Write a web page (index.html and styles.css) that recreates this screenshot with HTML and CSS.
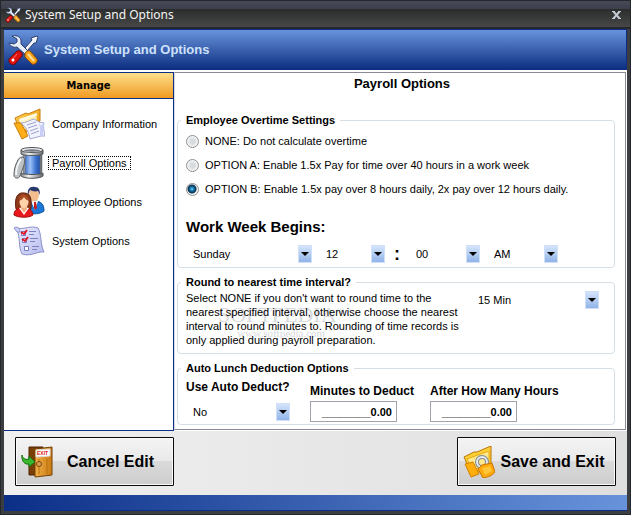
FILE: index.html
```html
<!DOCTYPE html>
<html lang="en">
<head>
<meta charset="utf-8">
<title>System Setup and Options</title>
<link rel="stylesheet" href="styles.css">
</head>
<body>
<svg class="defs" aria-hidden="true">
  <defs>
    <linearGradient id="gold" x1="0" y1="0" x2="1" y2="1"><stop offset="0" stop-color="#ffd75a"/><stop offset="1" stop-color="#ef8e00"/></linearGradient>
    <linearGradient id="steel" x1="0" y1="0" x2="1" y2="0"><stop offset="0" stop-color="#85888b"/><stop offset=".35" stop-color="#f5f6f6"/><stop offset="1" stop-color="#63666a"/></linearGradient>
    <linearGradient id="blue" x1="0" y1="0" x2="1" y2="0"><stop offset="0" stop-color="#2456b4"/><stop offset=".4" stop-color="#9cc2f8"/><stop offset=".7" stop-color="#3f74d0"/><stop offset="1" stop-color="#1a479f"/></linearGradient>
    <linearGradient id="sheet" x1="0" y1="0" x2="1" y2="1"><stop offset="0" stop-color="#eceeff"/><stop offset="1" stop-color="#b7bbee"/></linearGradient>
    <linearGradient id="wood" x1="0" y1="0" x2="1" y2="0"><stop offset="0" stop-color="#f2b047"/><stop offset="1" stop-color="#c97a14"/></linearGradient>
    <linearGradient id="drop" x1="0" y1="0" x2="0" y2="1"><stop offset="0" stop-color="#d6e6fb"/><stop offset="1" stop-color="#8fb2e8"/></linearGradient>
    <symbol id="tools" viewBox="0 0 32 32">
      <path d="M18 14 25 6l-1-2 6-2 1 1-2 6-2 0-7 8z" fill="#f2f6fc" stroke="#29406f"/>
      <path d="M5 2c3-1 8 0 9 4l0 4 8 8-3 3-9-8c-4 1-7-1-8-4l5 1 3-2 0-3z" fill="#e6edf7" stroke="#29406f"/>
      <path d="M18 20c0-2 3-4 5-3l7 8c1 3-2 6-5 5l-7-7z" fill="#f7a21a" stroke="#8d4a00"/>
      <path d="M21 20l6 7" stroke="#ffe09a" stroke-width="2"/>
      <path d="M10 17c3-1 6 2 5 5l-7 8c-3 2-7-1-6-5z" fill="#e01010" stroke="#6e0505"/>
      <path d="M10 20l-5 6" stroke="#ff7565"/>
      <circle cx="6" cy="26" r="1.5" fill="#fff"/>
    </symbol>
    <symbol id="folder" viewBox="0 0 32 32">
      <path d="M2 10 13 5l2 1L27 1v12L9 28z" fill="url(#gold)" stroke="#c77d10"/>
      <path d="M5 12 24 5v12L11 22z" fill="#fff3b6" stroke="#eab33c"/>
      <path d="M6 11l18-6v2L8 14z" fill="#fffbe6"/>
      <path d="M1 15h7l7 13-6 3z" fill="#ffae15" stroke="#c77d10"/>
      <path d="M8 15c5 0 9-3 13-4l5 3 5 1c-1 4 0 8 1 13l-4 0-11 3c-1-6-3-11-9-16z" fill="#f1f3ff" stroke="#a4a9cf"/>
      <path d="M27 14l-1 4 5-2-1 11-3 1z" fill="#c8cef5"/>
      <path d="M14 17l9-3M15 20l9-3M17 23l8-3M18 26l8-3" stroke="#9ca2c8"/>
    </symbol>
    <symbol id="barrel" viewBox="0 0 32 32">
      <path d="M10 7h18v20H10z" fill="url(#blue)"/>
      <path d="M8 26c3 2 19 2 22 0v3c-3 3-19 3-22 0z" fill="url(#steel)" stroke="#4e5155"/>
      <path d="M10 8h2v18h-2zM27 8h2v18h-2z" fill="url(#steel)" stroke="#6a6d71" stroke-width=".5"/>
      <path d="M8 3v4c3 2 19 2 22 0V3z" fill="url(#steel)" stroke="#55585c"/>
      <ellipse cx="19" cy="3" rx="11" ry="2.500" fill="#e6e8ea" stroke="#55585c"/>
      <ellipse cx="19" cy="3.500" rx="8" ry="1.200" fill="#737a82"/>
      <path d="M9 10c3 0 3 4 2 8L7 29c-1 3-6 3-6-1 0-5 1-9 3-13 1-3 3-5 5-5z" fill="#bfc2c4" stroke="#5d6063"/>
      <path d="M8 12C5 16 3 21 3 28" fill="none" stroke="#f4f5f6" stroke-width="2"/>
    </symbol>
    <symbol id="people" viewBox="0 0 32 32">
      <path d="M14 26c0-8 2-11 7-11 7 0 10 3 10 10-4 3-10 4-17 1z" fill="#1c78d8" stroke="#0f4d9b"/>
      <path d="M18 15l4 9 3-9z" fill="#fff"/><path d="M21 16h2l1 6-2 2-1-2z" fill="#cb1a1a"/>
      <ellipse cx="21" cy="9" rx="5" ry="6.500" fill="#f3bd8e"/>
      <path d="M15 9c-1-6 2-9 7-8 4 0 5 3 5 8l-2-4c-3 1-6 0-8-1z" fill="#29386b"/>
      <path d="M3 23C1 11 5 6 11 7c6 0 8 5 7 16-3 2-12 3-15 0z" fill="#8c3818" stroke="#5e210b"/>
      <path d="M1 29c0-5 3-7 9-7 7 0 9 2 10 7-4 3-14 3-19 0z" fill="#e8191c" stroke="#a90d0d"/>
      <path d="M6 22l5 7 5-7-5-1z" fill="#fff"/><path d="M8 20h6v3l-3 4-3-4z" fill="#efb184"/>
      <ellipse cx="11" cy="16" rx="4.500" ry="6" fill="#ffd2aa"/>
      <path d="M6 15c2-1 4-2 5-4 1 2 3 3 5 4l-1-5-5-2-4 3z" fill="#a84a23"/>
    </symbol>
    <symbol id="checks" viewBox="0 0 32 32">
      <path d="M3 3c8 2 15-3 22 0 4 7 2 16 6 24-7-1-13 5-22 2C5 22 8 12 3 3z" fill="url(#sheet)" stroke="#8a90c8"/>
      <path d="M1 3c3-2 6 0 6 4l-3 0z" fill="#cbd0fa" stroke="#8a90c8"/>
      <path d="M8.500 6.500h4v4h-4zM9.500 13.500h4v4h-4zM11.500 21.500h4v4h-4z" fill="#fff" stroke="#747bc0"/>
      <path d="M8 7l3 2 3-4M9 14l3 2 3-4" fill="none" stroke="#e11522" stroke-width="2"/>
      <path d="M16 6.500h7M16 9.500h5M17 13.500h8M17 16.500h5M19 21.500h7M19 24.500h5" stroke="#7d84bd"/>
    </symbol>
    <symbol id="door" viewBox="0 0 32 32">
      <path d="M8 1h14v28H8z" fill="#7a3f07" stroke="#4f2703"/>
      <path d="M14 3 31 1v28l-17 2z" fill="url(#wood)" stroke="#744006"/>
      <path d="M18 13v15M26 13v15" stroke="#b9700f"/>
      <path d="M15 4l14-1v7l-14 1z" fill="#fff" stroke="#dcdcdc"/>
      <circle cx="18" cy="18" r="2.500" fill="#dba254" stroke="#7c450c"/>
      <path d="M1 9c1 4 4 5 7 4l0-3 6 6-6 5v-3C4 19 0 15 1 9z" fill="#39b72c" stroke="#197010"/>
      <text x="16" y="9" class="exit-sign">EXIT</text>
    </symbol>
    <symbol id="save" viewBox="0 0 32 32">
      <path d="M1 11l10-5 3 0L28 0v20L9 29z" fill="#ffd033" stroke="#b87408"/>
      <path d="M4 13 26 5v13L10 24z" fill="#ffe98c" stroke="#e6a91e"/>
      <path d="M2 18l8-2 6 12-8 3z" fill="#ffae0b" stroke="#d18007"/>
      <circle cx="19" cy="16" r="5" fill="none" stroke="#7f8790" stroke-width="4"/>
      <circle cx="19" cy="16" r="5" fill="none" stroke="#e5ebf0" stroke-width="2"/>
      <path d="M15 23l4-4 10-2 3 9c-3 4-7 5-12 6z" fill="#ffa90c" stroke="#ca7700"/>
      <path d="M19 22l8-2 2 5-7 4z" fill="#ffc63a"/>
    </symbol>
    <symbol id="arrow" viewBox="0 0 14 18">
      <rect x=".5" y=".5" width="13" height="17" fill="url(#drop)" stroke="#cfe0f8"/>
      <path d="M3 7h8L7 11z" fill="#000"/>
    </symbol>
  </defs>
</svg>
<div class="window">
  <header class="titlebar">
    <svg class="title-icon"><use href="#tools"/></svg>
    <span class="title-text">System Setup and Options</span>
    <button class="close" type="button" aria-label="Close"><svg viewBox="0 0 9 8"><path d="M0 .5h3M6 .5h3M0 7.500h3M6 7.500h3" stroke="#c3cbd6"/><path d="M1.500 .5l6 7M7.500 .5l-6 7" stroke="#c3cbd6" stroke-width="2"/></svg></button>
  </header>
  <div class="client">
    <div class="banner">
      <svg class="icon"><use href="#tools"/></svg>
      <h1>System Setup and Options</h1>
    </div>
    <div class="body">
      <nav class="sidebar">
        <h2>Manage</h2>
        <a href="#company"><svg class="icon"><use href="#folder"/></svg><span>Company Information</span></a>
        <a href="#payroll" class="current"><svg class="icon"><use href="#barrel"/></svg><span>Payroll Options</span></a>
        <a href="#employee"><svg class="icon"><use href="#people"/></svg><span>Employee Options</span></a>
        <a href="#system"><svg class="icon"><use href="#checks"/></svg><span>System Options</span></a>
      </nav>
      <main class="panel">
        <h2>Payroll Options</h2>
        <fieldset>
          <legend>Employee Overtime Settings</legend>
          <label class="choice"><input type="radio" name="overtime">NONE: Do not calculate overtime</label>
          <label class="choice"><input type="radio" name="overtime">OPTION A: Enable 1.5x Pay for time over 40 hours in a work week</label>
          <label class="choice"><input type="radio" name="overtime" checked>OPTION B: Enable 1.5x pay over 8 hours daily, 2x pay over 12 hours daily.</label>
          <h3>Work Week Begins:</h3>
          <div class="times">
            <span class="drop day"><select aria-label="Day"><option>Sunday</option></select><svg><use href="#arrow"/></svg></span>
            <span class="drop hour"><select aria-label="Hour"><option>12</option></select><svg><use href="#arrow"/></svg></span>
            <span class="colon">:</span>
            <span class="drop part"><select aria-label="Minute"><option>00</option></select><svg><use href="#arrow"/></svg></span>
            <span class="drop part"><select aria-label="AM or PM"><option>AM</option></select><svg><use href="#arrow"/></svg></span>
          </div>
        </fieldset>
        <fieldset class="rounding">
          <legend>Round to nearest time interval?</legend>
          <div class="round-row">
            <div class="watermark"><b>SOFTPEDIA<sup>™</sup></b><span>www.softpedia.com</span></div>
            <p>Select NONE if you don't want to round time to the<br>nearest specified interval, otherwise choose the nearest<br>interval to round minutes to. Rounding of time records is<br>only applied during payroll preparation.</p>
            <span class="drop interval"><select aria-label="Time interval"><option>15 Min</option></select><svg><use href="#arrow"/></svg></span>
          </div>
        </fieldset>
        <fieldset class="lunch">
          <legend>Auto Lunch Deduction Options</legend>
          <div class="lunch-row">
            <div class="field auto"><label for="auto">Use Auto Deduct?</label><span class="drop"><select id="auto"><option>No</option></select><svg><use href="#arrow"/></svg></span></div>
            <div class="field amount"><label for="minutes">Minutes to Deduct</label><input id="minutes" type="text" value="________0.00"></div>
            <div class="field amount"><label for="hours">After How Many Hours</label><input id="hours" type="text" value="________0.00"></div>
          </div>
        </fieldset>
      </main>
    </div>
    <footer class="actions">
      <button type="button"><svg class="icon"><use href="#door"/></svg><span>Cancel Edit</span></button>
      <button type="button"><svg class="icon"><use href="#save"/></svg><span>Save and Exit</span></button>
    </footer>
    <div class="strip"></div>
  </div>
</div>
</body>
</html>
```
FILE: styles.css
```css
* { box-sizing: border-box; }
body {
  margin: 0;
  font: 11px/14px "Liberation Sans", Arial, sans-serif;
  color: #000;
}
h1, h2, h3, p { margin: 0; }
.defs { position: absolute; width: 0; height: 0; }
.icon { width: 32px; height: 32px; flex: none; }
.window {
  display: flex;
  flex-direction: column;
  min-height: 100vh;
  padding: 0 3px 3px;
  background: #3b3d41;
  border: 1px solid #24272c;
}
.titlebar {
  display: flex;
  align-items: center;
  gap: 4px;
  height: 28px;
  margin: 0 -3px;
  padding: 0 9px 0 4px;
  background: linear-gradient(#474a56 0, #3d404c 8px, #2b2c2c 8px, #474747 26px, #24272c 26px);
}
.title-icon { width: 16px; height: 16px; }
.title-text { flex: 1; font: 12px/16px "Noto Sans", Tahoma, sans-serif; color: #f4f4f4; }
.close { display: flex; padding: 0; border: 0; background: none; }
.close svg { width: 9px; height: 8px; }
.client { flex: 1; display: flex; flex-direction: column; background: #fff; }
.banner {
  display: flex;
  align-items: center;
  gap: 5px;
  height: 41px;
  padding-left: 3px;
  border: 1px solid #0b2f87;
  border-width: 1px 1px 0 0;
  background: linear-gradient(#6893db, #0b2d80);
}
.banner h1 { font-size: 13px; line-height: 20px; color: #cfe2fc; }
.body { flex: 1; display: flex; padding-top: 2px; }
.sidebar {
  width: 170px;
  flex: none;
  border: 1px solid #0b2f87;
  border-width: 1px 1px 1px 0;
}
.sidebar h2 {
  margin-bottom: 9px;
  font: bold 11px/25px "DejaVu Sans Condensed", Tahoma, sans-serif;
  text-align: center;
  border-bottom: 1px solid #0b2f87;
  background: linear-gradient(#fddf8a, #f09a22);
}
.sidebar a {
  display: flex;
  align-items: center;
  gap: 3px;
  height: 32px;
  margin: 0 0 7px 9px;
  color: #000;
  text-decoration: none;
}
.sidebar span { padding: 0 3px; line-height: 12px; border: 1px dotted transparent; }
.sidebar .current span { border-color: #000; }
.panel {
  flex: 1;
  margin: 0 1px 1px 0;
  padding: 0 10px 4px 2px;
  border: 1px solid #8a8a96;
  border-left-color: #d6dae2;
}
.panel h2 { margin-bottom: 18px; padding-left: 12px; font-size: 13px; line-height: 22px; text-align: center; }
fieldset {
  min-width: 0;
  margin: 0 0 7px;
  padding: 2px 14px 4px 8px;
  border: 1px solid #d5dfe5;
  border-radius: 4px;
}
legend { margin-left: -5px; padding: 0 5px; font-weight: bold; font-size: 11px; line-height: 14px; }
.choice { display: flex; align-items: center; gap: 6px; height: 24px; }
input[type="radio"] {
  appearance: none;
  width: 13px;
  height: 13px;
  margin: 0;
  border: 1px solid #8e8f8f;
  border-radius: 50%;
  background: radial-gradient(#d8dcdf 30%, #f4f4f4 65%);
}
input[type="radio"]:checked { background: radial-gradient(circle at 5px 5px, #7fd5f8 0, #1173ab 2px, #0c2f4b 4px, #f4f4f4 5px); }
h3 { margin: 16px 0 8px; font-size: 15px; line-height: 20px; }
.times { display: flex; gap: 7px; align-items: center; }
.drop { display: grid; height: 18px; }
.drop select, .drop svg { grid-area: 1 / 1; }
.drop select {
  appearance: none;
  min-width: 0;
  padding: 0 14px 0 7px;
  border: 0;
  background: none;
  font: inherit;
  color: inherit;
}
.drop svg { width: 14px; height: 18px; justify-self: end; pointer-events: none; }
.day { width: 126px; }
.hour { width: 66px; }
.part { width: 71px; }
.colon { width: 10px; font-weight: bold; font-size: 18px; line-height: 18px; text-align: center; }
.rounding { padding-right: 15px; padding-bottom: 6px; }
.round-row { position: relative; display: flex; justify-content: space-between; }
.round-row p { position: relative; }
.interval { width: 128px; }
.watermark {
  position: absolute;
  left: 32px;
  top: 13px;
  display: flex;
  flex-direction: column;
  align-items: center;
  font: 11px/14px "Liberation Serif", serif;
  color: #d9dade;
  pointer-events: none;
}
.watermark b { font-size: 22px; line-height: 22px; font-weight: normal; }
.watermark sup { font-size: 8px; line-height: 8px; }
.lunch { margin: 0; padding-top: 3px; padding-bottom: 2px; }
.lunch-row { display: flex; align-items: flex-end; }
.field { display: flex; flex-direction: column; }
.field label { font-weight: bold; font-size: 12px; line-height: 18px; }
.auto { width: 104px; margin-right: 20px; gap: 7px; padding-bottom: 1px; }
.amount { width: 120px; gap: 1px; white-space: nowrap; }
.amount input {
  width: 87px;
  height: 21px;
  padding: 0 4px;
  border: 1px solid #a2a2aa;
  font: bold 11px/14px "Liberation Sans", Arial, sans-serif;
  text-align: right;
}
.actions {
  display: flex;
  justify-content: space-between;
  padding: 6px 11px 9px;
  background: linear-gradient(90deg, #f0f0f0, #dfdfdf);
}
.actions button {
  display: flex;
  align-items: center;
  width: 159px;
  height: 49px;
  padding: 0 5px;
  border: 1px solid #0a0a0a;
  border-radius: 1px;
  background: linear-gradient(#f4f4f4 0, #e9e9e9 49%, #dadada 50%, #cdcdcd);
  box-shadow: inset 0 0 0 1px #fafafa;
  color: #000;
  font: bold 16px/20px "Liberation Sans", Arial, sans-serif;
}
.actions button span { flex: 1; text-align: center; }
.strip { height: 16px; background: linear-gradient(90deg, #0b2f87, #6893db); border-bottom: 1px solid #0b2f87; }
.exit-sign { font: bold 5px "Liberation Sans", Arial, sans-serif; fill: #e01717; }
```
